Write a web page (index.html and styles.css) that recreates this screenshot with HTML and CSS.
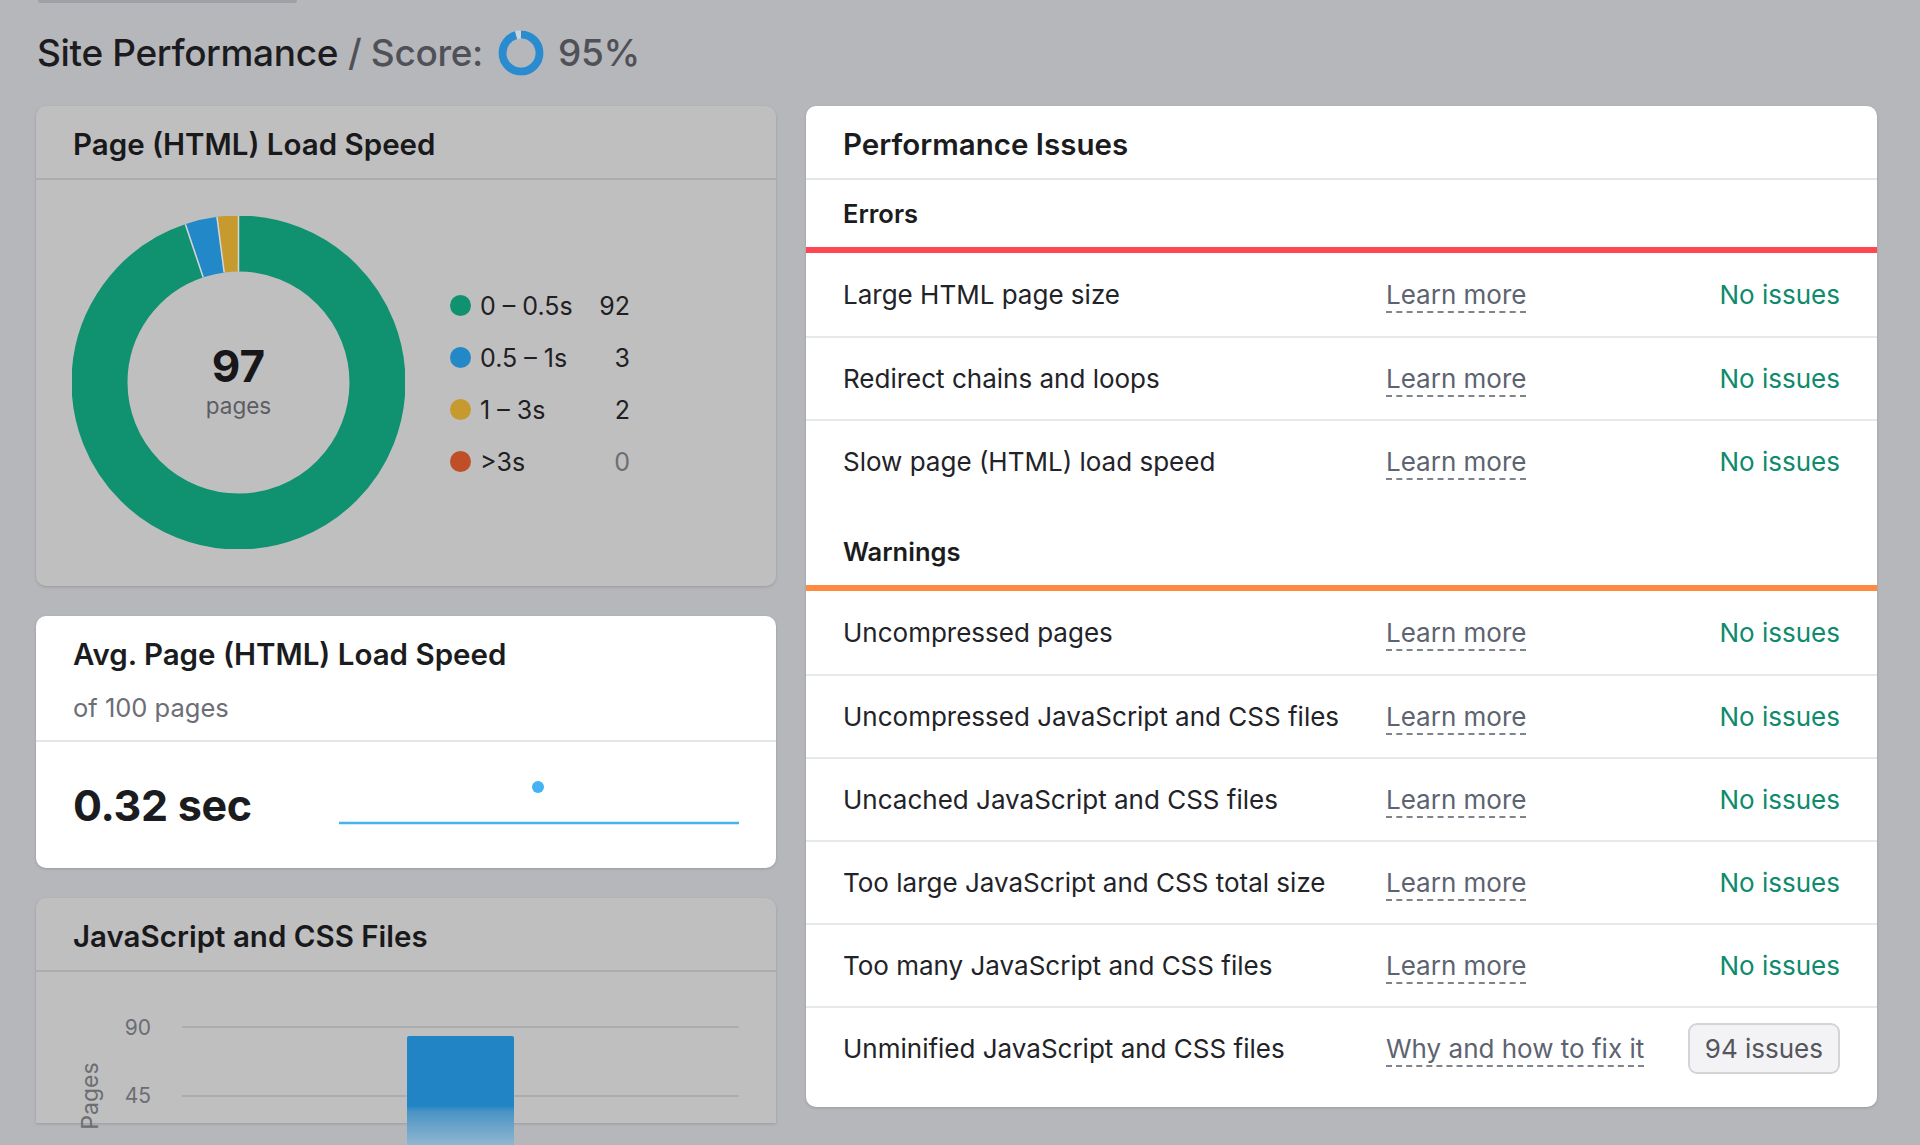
FILE: index.html
```html
<!DOCTYPE html>
<html lang="en">
<head>
<meta charset="utf-8">
<title>Site Performance</title>
<link rel="stylesheet" href="styles.css">
</head>
<body>
<div class="page">
  <div class="tab"></div>
  <h1 class="title">
    <span class="title-main">Site Performance</span>
    <span class="title-sub">/ Score:</span>
    <svg class="score-ring" width="46" height="46" viewBox="0 0 46 46">
      <circle cx="23" cy="23" r="18.5" fill="none" stroke="#cdd3da" stroke-width="8"/>
      <circle cx="23" cy="23" r="18.5" fill="none" stroke="#2a8bce" stroke-width="8" stroke-dasharray="110.4 200" transform="rotate(-90 23 23)"/>
    </svg>
    <span class="title-sub score-val">95%</span>
  </h1>

  <div class="grid">
    <div class="col-left">
      <section class="card card-dim card-speed">
        <header class="card-head">Page (HTML) Load Speed</header>
        <div class="speed-body">
          <div class="donut-wrap">
            <svg class="donut" width="333" height="333" viewBox="0 0 333 333">
              <g transform="rotate(-90 166.5 166.5)" fill="none" stroke-width="56">
                <circle cx="166.5" cy="166.5" r="139" stroke="#10916f" stroke-dasharray="828.34 1000"/>
                <circle cx="166.5" cy="166.5" r="139" stroke="#2388c7" stroke-dasharray="0 828.34 27.01 1000"/>
                <circle cx="166.5" cy="166.5" r="139" stroke="#c79a2f" stroke-dasharray="0 855.35 18.1 1000"/>
              </g>
              <g stroke="#d6d6d6" stroke-width="1.5">
                <line x1="131.17" y1="61.27" x2="113.34" y2="8.18"/>
                <line x1="152.17" y1="56.42" x2="144.94" y2="0.89"/>
                <line x1="166.5" y1="55.5" x2="166.5" y2="0"/>
              </g>
            </svg>
            <div class="donut-center">
              <div class="donut-num">97</div>
              <div class="donut-label">pages</div>
            </div>
          </div>
          <ul class="legend">
            <li class="legend-row"><span class="dot dot-green"></span><span class="legend-label">0 – 0.5s</span><span class="legend-num">92</span></li>
            <li class="legend-row"><span class="dot dot-blue"></span><span class="legend-label">0.5 – 1s</span><span class="legend-num">3</span></li>
            <li class="legend-row"><span class="dot dot-gold"></span><span class="legend-label">1 – 3s</span><span class="legend-num">2</span></li>
            <li class="legend-row"><span class="dot dot-red"></span><span class="legend-label">&gt;3s</span><span class="legend-num legend-zero">0</span></li>
          </ul>
        </div>
      </section>

      <section class="card card-white card-avg">
        <div class="avg-top">
          <div class="avg-title">Avg. Page (HTML) Load Speed</div>
          <div class="avg-sub">of 100 pages</div>
        </div>
        <div class="avg-bottom">
          <div class="avg-value">0.32 sec</div>
          <svg class="spark" width="400" height="126" viewBox="0 0 400 126">
            <line x1="0" y1="81" x2="400" y2="81" stroke="#45b2f3" stroke-width="2.5"/>
            <circle cx="199" cy="45" r="6" fill="#45b2f3"/>
          </svg>
        </div>
      </section>

      <section class="card card-dim card-files">
        <header class="card-head">JavaScript and CSS Files</header>
        <div class="files-body">
          <svg class="files-chart" width="740" height="175" viewBox="0 0 740 175">
            <defs>
              <linearGradient id="barFade" x1="0" y1="64" x2="0" y2="175" gradientUnits="userSpaceOnUse">
                <stop offset="0" stop-color="#2185c5"/>
                <stop offset="0.63" stop-color="#2185c5"/>
                <stop offset="0.68" stop-color="#4b93c6"/>
                <stop offset="0.84" stop-color="#70a6ca"/>
                <stop offset="1" stop-color="#95b9d1"/>
              </linearGradient>
            </defs>
            <line x1="146" y1="55" x2="703" y2="55" stroke="#adadb1" stroke-width="2"/>
            <line x1="146" y1="124" x2="703" y2="124" stroke="#adadb1" stroke-width="2"/>
            <text class="axis" x="115" y="55" text-anchor="end" dominant-baseline="central">90</text>
            <text class="axis" x="115" y="123" text-anchor="end" dominant-baseline="central">45</text>
            <text class="axis axis-title" transform="translate(54 124) rotate(-90)" text-anchor="middle" dominant-baseline="central">Pages</text>
            <path d="M371 175 V66 Q371 64 373 64 H476 Q478 64 478 66 V175 Z" fill="url(#barFade)"/>
          </svg>
        </div>
      </section>
    </div>

    <section class="card card-white issues">
      <header class="issues-head">Performance Issues</header>

      <div class="group-head group-errors">Errors</div>
      <div class="issue-row"><span class="issue-name">Large HTML page size</span><span class="issue-link"><a class="learn">Learn more</a></span><span class="issue-status">No issues</span></div>
      <div class="issue-row"><span class="issue-name">Redirect chains and loops</span><span class="issue-link"><a class="learn">Learn more</a></span><span class="issue-status">No issues</span></div>
      <div class="issue-row"><span class="issue-name">Slow page (HTML) load speed</span><span class="issue-link"><a class="learn">Learn more</a></span><span class="issue-status">No issues</span></div>

      <div class="group-head group-warnings">Warnings</div>
      <div class="issue-row"><span class="issue-name">Uncompressed pages</span><span class="issue-link"><a class="learn">Learn more</a></span><span class="issue-status">No issues</span></div>
      <div class="issue-row"><span class="issue-name">Uncompressed JavaScript and CSS files</span><span class="issue-link"><a class="learn">Learn more</a></span><span class="issue-status">No issues</span></div>
      <div class="issue-row"><span class="issue-name">Uncached JavaScript and CSS files</span><span class="issue-link"><a class="learn">Learn more</a></span><span class="issue-status">No issues</span></div>
      <div class="issue-row"><span class="issue-name">Too large JavaScript and CSS total size</span><span class="issue-link"><a class="learn">Learn more</a></span><span class="issue-status">No issues</span></div>
      <div class="issue-row"><span class="issue-name">Too many JavaScript and CSS files</span><span class="issue-link"><a class="learn">Learn more</a></span><span class="issue-status">No issues</span></div>
      <div class="issue-row"><span class="issue-name">Unminified JavaScript and CSS files</span><span class="issue-link"><a class="learn">Why and how to fix it</a></span><span class="issue-status"><span class="badge">94 issues</span></span></div>
    </section>
  </div>
</div>
</body>
</html>
```

FILE: styles.css
```css
* { box-sizing: border-box; }

html, body {
  margin: 0;
  padding: 0;
  height: 1145px;
  overflow: hidden;
}

body {
  background: #b6b7bb;
  font-family: "Inter", "Liberation Sans", sans-serif;
  color: #1d1e22;
}

.page {
  padding: 0 43px 0 36px;
}

.tab {
  width: 259px;
  height: 3px;
  margin-left: 2px;
  background: #9fa0a5;
  border-radius: 0 0 6px 6px;
}

.title {
  margin: 28px 0 0 1px;
  height: 44px;
  display: flex;
  align-items: center;
  font-size: 37px;
  font-weight: 500;
  line-height: 44px;
  letter-spacing: -0.35px;
}

.title-main { color: #1c1c20; }

.title-sub {
  color: #505158;
  margin-left: 10px;
}

.score-ring {
  margin-left: 15px;
  display: block;
}

.score-val { margin-left: 14px; }

.grid {
  display: grid;
  grid-template-columns: 740px 1071px;
  column-gap: 30px;
  align-items: start;
  margin-top: 31px;
}

.col-left {
  display: flex;
  flex-direction: column;
  gap: 30px;
}

.card {
  border-radius: 10px;
  box-shadow: 0 1px 3px rgba(0, 0, 0, 0.16);
}

.card-dim { background: #bfbfc0; }
.card-white { background: #ffffff; }

.card-head {
  height: 74px;
  padding: 0 37px;
  border-bottom: 2px solid #adadb1;
  font-size: 29.5px;
  font-weight: 600;
  line-height: 76px;
  color: #19191c;
}

/* Page load speed donut card */
.speed-body {
  display: flex;
  align-items: center;
  padding: 36px 36px 37px 36px;
}

.donut-wrap {
  display: grid;
  width: 333px;
  height: 333px;
}

.donut,
.donut-center {
  grid-area: 1 / 1;
}

.donut { display: block; }

.donut-center {
  align-self: center;
  justify-self: center;
  display: flex;
  flex-direction: column;
  align-items: center;
  gap: 6px;
  margin-bottom: 4px;
}

.donut-num {
  font-size: 44px;
  font-weight: 700;
  line-height: 44px;
  color: #17171a;
}

.donut-label {
  font-size: 22.5px;
  line-height: 24px;
  color: #5c5d63;
}

.legend {
  list-style: none;
  margin: 0 0 0 45px;
  padding: 0;
}

.legend-row {
  display: flex;
  align-items: center;
  height: 52px;
  font-size: 25px;
  line-height: 30px;
  padding-top: 2px;
  color: #1f2024;
}

.dot {
  width: 21px;
  height: 21px;
  border-radius: 50%;
  margin-right: 9px;
  flex: none;
}

.dot-green { background: #10916f; }
.dot-blue { background: #2388c7; }
.dot-gold { background: #c79a2f; }
.dot-red { background: #c04e27; }

.legend-label { width: 106px; }

.legend-num {
  width: 44px;
  text-align: right;
}

.legend-zero { color: #6d6e73; }

/* Avg load speed card */
.avg-top {
  padding: 20px 37px 16px;
  border-bottom: 2px solid #e5e6ea;
}

.avg-title {
  font-size: 29.5px;
  font-weight: 600;
  line-height: 36px;
  color: #1b1c20;
}

.avg-sub {
  margin-top: 20px;
  font-size: 25.5px;
  line-height: 32px;
  color: #6c6e76;
}

.avg-bottom {
  display: flex;
  align-items: center;
  height: 126px;
  padding: 0 37px;
}

.avg-value {
  width: 266px;
  font-size: 43px;
  font-weight: 700;
  color: #1b1c20;
  letter-spacing: -0.3px;
}

.spark { display: block; }

/* JS and CSS files card */
.card-files {
  height: 225px;
  border-radius: 10px 10px 0 0;
}

.files-body {
  height: 151px;
}

.files-chart {
  display: block;
  overflow: visible;
}

.axis {
  font-family: "Inter", "Liberation Sans", sans-serif;
  font-size: 21px;
  fill: #6c6d72;
}

.axis-title { font-size: 23px; }

/* Performance issues card */
.issues {
  padding-bottom: 18px;
}

.issues-head {
  height: 74px;
  padding: 0 37px;
  border-bottom: 2px solid #e4e5e9;
  font-size: 29.5px;
  font-weight: 600;
  line-height: 76px;
  color: #1b1c20;
}

.group-head {
  height: 73px;
  padding: 0 37px;
  font-size: 25.5px;
  font-weight: 600;
  line-height: 67px;
  color: #1b1c20;
}

.group-errors { border-bottom: 6px solid #ff4754; }

.group-warnings {
  margin-top: 16px;
  border-bottom: 6px solid #ff8b42;
}

.issue-row {
  display: grid;
  grid-template-columns: 543px 1fr auto;
  align-items: center;
  height: 83px;
  padding: 0 37px;
  font-size: 26px;
  color: #222328;
}

.issue-row + .issue-row {
  border-top: 2px solid #e7e8ec;
}

.learn {
  color: #5d6370;
  text-decoration: underline dashed #7f838c;
  text-decoration-thickness: 2px;
  text-underline-offset: 7px;
  cursor: pointer;
}

.issue-status {
  color: #0e8a6c;
  text-align: right;
}

.badge {
  display: inline-block;
  height: 51px;
  padding: 0 15px;
  border: 2px solid #d3d4d8;
  border-radius: 9px;
  background: #f3f3f5;
  color: #55565d;
  line-height: 47px;
}
```
